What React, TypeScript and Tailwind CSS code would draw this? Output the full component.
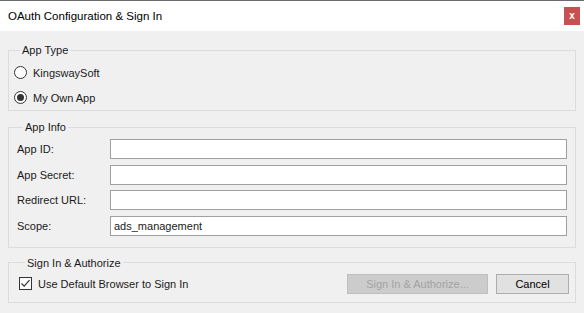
import { useState } from "react";

function Radio({ checked, label }: { checked: boolean; label: string }) {
  return (
    <div className="flex h-[25px] items-center">
      <span className="flex h-[13px] w-[13px] items-center justify-center rounded-full border border-[#333333] bg-white">
        {checked && <span className="h-[7px] w-[7px] rounded-full bg-[#333333]" />}
      </span>
      <span className="ml-[6px]">{label}</span>
    </div>
  );
}

function Field({ label, value }: { label: string; value?: string }) {
  return (
    <div className="flex h-[20px] items-center">
      <span className="w-[93px]">{label}</span>
      <div className="flex h-[20px] flex-1 items-center border border-[#a0a0a0] bg-white px-[3px]">
        {value}
      </div>
    </div>
  );
}

export default function App() {
  const [useDefault] = useState(true);

  return (
    <div
      className="h-[313px] w-[584px] overflow-hidden bg-[#f0f0f0] text-[11px] leading-[14px] text-[#1a1a1a]"
      style={{ fontFamily: '"Liberation Sans", Arial, sans-serif' }}
    >
      <div className="flex h-[31px] items-center justify-between border-t border-[#6b6b6b] bg-white pl-2 pr-1">
        <span className="text-[11.5px] text-black">OAuth Configuration &amp; Sign In</span>
        <span className="flex h-[18px] w-[16px] items-center justify-center bg-[#c75050] text-[10px] font-bold leading-none text-white">
          x
        </span>
      </div>

      <div className="flex flex-col px-2 pt-[12px]">
        <fieldset className="border border-[#dcdcdc] pl-[5px]">
          <legend className="ml-[6px] px-[2px]">App Type</legend>
          <div className="pt-[3px]">
            <Radio checked={false} label="KingswaySoft" />
            <Radio checked label="My Own App" />
          </div>
        </fieldset>

        <fieldset className="mt-[9px] border border-[#dcdcdc] px-[8px] pb-[11px]">
          <legend className="ml-[6px] px-[2px]">App Info</legend>
          <div className="mt-[5px] flex flex-col gap-[5.67px]">
            <Field label="App ID:" />
            <Field label="App Secret:" />
            <Field label="Redirect URL:" />
            <Field label="Scope:" value="ads_management" />
          </div>
        </fieldset>

        <fieldset className="mt-[8px] border border-[#dcdcdc] pl-[10px] pr-[6px] pb-[8px]">
          <legend className="ml-[6px] px-[2px]">Sign In &amp; Authorize</legend>
          <div className="mt-[4px] flex h-[20px] items-center">
            <span className="flex h-[13px] w-[13px] items-center justify-center border border-[#333333] bg-white">
              {useDefault && (
                <svg width="11" height="11" viewBox="0 0 11 11">
                  <path d="M1.5 5.5 L4.2 8.2 L9.5 2.2" fill="none" stroke="#333333" strokeWidth="1.2" />
                </svg>
              )}
            </span>
            <span className="ml-[6px]">Use Default Browser to Sign In</span>
            <div className="ml-auto flex gap-[8px]">
              <button
                disabled
                className="flex h-[20px] w-[141px] items-center justify-center border border-[#bfbfbf] bg-[#cccccc] text-[#a3a3a3]"
              >
                Sign In &amp; Authorize...
              </button>
              <button className="flex h-[20px] w-[73px] items-center justify-center border border-[#adadad] bg-[#e1e1e1] text-black">
                Cancel
              </button>
            </div>
          </div>
        </fieldset>
      </div>
    </div>
  );
}
